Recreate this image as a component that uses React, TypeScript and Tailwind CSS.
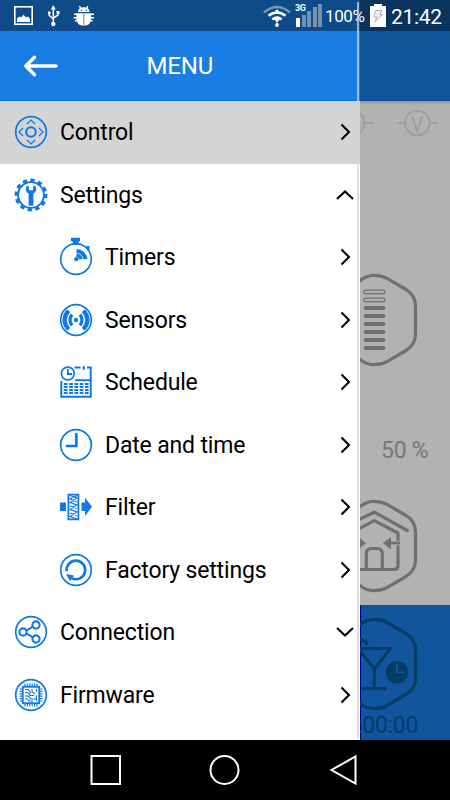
import type { ReactNode } from "react";

const BLUE = "#0f7ae5";

function Icon({ children, ring = true }: { children?: ReactNode; ring?: boolean }) {
  return (
    <svg width="34" height="44" viewBox="-17 -22 34 44" fill="none" stroke={BLUE} strokeWidth="1.7" className="shrink-0">
      {ring && <circle r="15.3" />}
      {children}
    </svg>
  );
}

const ControlIcon = () => (
  <Icon>
    <circle r="4.8" strokeWidth="2" />
    <path strokeWidth="1.2" d="M-4 -8L0 -12L4 -8M-4 8L0 12L4 8M-8 -4L-12 0L-8 4M8 -4L12 0L8 4" />
  </Icon>
);

const SettingsIcon = () => (
  <Icon ring={false}>
    <circle r="12.9" strokeWidth="1.9" />
    <circle r="14.6" strokeWidth="3.6" strokeDasharray="4.2 3.445" transform="rotate(-4)" />
    <path stroke="none" fill={BLUE} d="M-4.2 -9.6Q-7 -3.8 -2.4 -1.5V10.8H2.4V-1.5Q7 -3.8 4.2 -9.6L2.1 -8.6V-4.7H-2.1V-8.6Z" />
  </Icon>
);

const TimersIcon = () => (
  <Icon ring={false}>
    <circle cy="2" r="15.3" />
    <path stroke="none" fill={BLUE} d="M-5 -19.2H4V-16L2.5 -15V-12H-3V-15L-5 -16ZM9 -10L11.5 -11H13.5V-7.5L12.5 -6.5Z" />
    <circle cx="0.3" cy="2.2" r="2.1" fill={BLUE} stroke="none" />
    <path strokeWidth="3.6" d="M0.5 -1.8Q4.3 -1.5 5 2.2" />
    <path strokeWidth="3.8" d="M0.5 -6.2Q8.3 -5.2 9.7 2.2" />
  </Icon>
);

const SensorsIcon = () => (
  <Icon>
    <circle r="2.2" fill={BLUE} stroke="none" />
    <path strokeWidth="3.2" d="M-4 -5.5Q-8 0 -4 5.5M4 -5.5Q8 0 4 5.5" />
    <path strokeWidth="4.2" d="M-7.4 -9.4Q-15.4 0 -7.4 9.4M7.4 -9.4Q15.4 0 7.4 9.4" />
  </Icon>
);

const ScheduleIcon = () => (
  <Icon ring={false}>
    <path strokeWidth="2" d="M-14.7 -1V14.7H14.7V-14.5H11M8.5 -14.5H6.5M4.5 -14.5H-1.5M-1 -1.8H14" />
    <path strokeWidth="1.5" d="M8 -16V-12" />
    <circle cx="-8.2" cy="-8.5" r="6.4" />
    <path strokeWidth="1.8" d="M-8.2 -13V-8H-3.8" />
    <path strokeWidth="1.9" strokeDasharray="3.8 1.5" d="M-12.2 2H12.5M-12.2 5H12.5M-12.2 8H12.5M-12.2 11H12.5" />
  </Icon>
);

const ClockIcon = () => (
  <Icon>
    <path strokeWidth="2.7" strokeLinecap="round" d="M0.3 -11V1H-9" />
  </Icon>
);

const FilterIcon = () => (
  <Icon ring={false}>
    <path stroke="none" fill={BLUE} d="M-16 -4.5H-10V4H-16ZM5.5 -4.5H9V-9.2L16 -0.2L9 9V4H5.5Z" />
    <path strokeWidth="1.8" d="M-7.6 -12.4H2.4V12.4H-7.6Z" />
    <path strokeWidth="1.2" d="M-6 -11.5L1 -9L-6 -4.5L1 -2L-6 2.5L1 5L-6 9.5L1 12M1 -11.5L-6 -8L1 -5M-6 -1L1 1.5M-6 6L1 8.5" />
  </Icon>
);

const ResetIcon = () => (
  <Icon>
    <path strokeWidth="2.6" d="M-9.3 1.3A9.3 9.3 0 1 1 -4 8.4" />
    <path stroke="none" fill={BLUE} d="M-10 4L-2 5.4L-5.5 11L-7.2 9Z" />
  </Icon>
);

const ShareIcon = () => (
  <Icon>
    <g strokeWidth="2.1">
      <circle cx="-8" cy="0" r="3.6" />
      <circle cx="5" cy="-7" r="3.6" />
      <circle cx="5" cy="7" r="3.6" />
      <path d="M-4.6 -1.6L1.7 -5.2M-4.6 1.6L1.7 5.2" />
    </g>
  </Icon>
);

const ChipIcon = () => (
  <Icon>
    <rect x="-8.2" y="-8.2" width="16.4" height="16.4" strokeWidth="1.8" />
    <path
      strokeWidth="1.2"
      d="M-6 -11.5V-8M-3.6 -11.5V-8M-1.2 -11.5V-8M1.2 -11.5V-8M3.6 -11.5V-8M6 -11.5V-8M-6 11.5V8M-3.6 11.5V8M-1.2 11.5V8M1.2 11.5V8M3.6 11.5V8M6 11.5V8M-11.5 -6H-8M-11.5 -3.6H-8M-11.5 -1.2H-8M-11.5 1.2H-8M-11.5 3.6H-8M-11.5 6H-8M11.5 -6H8M11.5 -3.6H8M11.5 -1.2H8M11.5 1.2H8M11.5 3.6H8M11.5 6H8"
    />
    <path
      strokeWidth="1.1"
      d="M-6 -5.5H-3L-1 -3.5V-1M1 -6V-3L4 -1M5.5 -6V-3M-6 -2.5H-3.5L-1 0.5H3M-6 1H-3L0 4H5.5M-6 4H-3.5L-2 6H2M5.5 0.5V6"
    />
  </Icon>
);

type Arrow = "right" | "up" | "down";

const items: { label: string; icon: ReactNode; arrow: Arrow; sub?: boolean; active?: boolean }[] = [
  { label: "Control", icon: <ControlIcon />, arrow: "right", active: true },
  { label: "Settings", icon: <SettingsIcon />, arrow: "up" },
  { label: "Timers", icon: <TimersIcon />, arrow: "right", sub: true },
  { label: "Sensors", icon: <SensorsIcon />, arrow: "right", sub: true },
  { label: "Schedule", icon: <ScheduleIcon />, arrow: "right", sub: true },
  { label: "Date and time", icon: <ClockIcon />, arrow: "right", sub: true },
  { label: "Filter", icon: <FilterIcon />, arrow: "right", sub: true },
  { label: "Factory settings", icon: <ResetIcon />, arrow: "right", sub: true },
  { label: "Connection", icon: <ShareIcon />, arrow: "down" },
  { label: "Firmware", icon: <ChipIcon />, arrow: "right" },
];

const arrowPaths: Record<Arrow, string> = {
  right: "M-3.5 -7.5L4 0L-3.5 7.5",
  up: "M-8 4L0 -3.6L8 4",
  down: "M-8 -4L0 3.6L8 -4",
};

function Chevron({ dir }: { dir: Arrow }) {
  return (
    <svg width="20" height="20" viewBox="-10 -10 20 20" fill="none" stroke="#000" strokeWidth="2.1" className="shrink-0">
      <path d={arrowPaths[dir]} />
    </svg>
  );
}

function Drawer() {
  return (
    <aside className="w-[360px] shrink-0 flex flex-col bg-white">
      <header className="h-[101px] pt-[31px] flex items-center bg-[#1a7de3] border-b border-[#0873e6]">
        <svg width="36" height="24" viewBox="0 0 36 24" fill="none" stroke="#fff" strokeWidth="3.4" strokeLinecap="round" strokeLinejoin="round" className="ml-[23px]">
          <path d="M33 12H3M11.5 3.2L2.8 12L11.5 20.8" />
        </svg>
        <h1 className="ml-[87.5px] pt-px text-[24px] leading-none tracking-[-0.15px] text-white">MENU</h1>
      </header>
      <nav className="flex-1 text-[23px] tracking-[-0.17px] text-black">
        {items.map((item) => (
          <div
            key={item.label}
            className={`h-[62.5px] flex items-center pr-[5px] ${item.sub ? "pl-[59px]" : "pl-[14px]"} ${item.active ? "bg-[#d4d4d4]" : ""}`}
          >
            {item.icon}
            <span className="flex-1 ml-3 pt-[2px] whitespace-nowrap">{item.label}</span>
            <Chevron dir={item.arrow} />
          </div>
        ))}
      </nav>
    </aside>
  );
}

function HexTile({ color, children }: { color: string; children: ReactNode }) {
  return (
    <svg width="90" height="100" viewBox="0 0 90 100" fill="none" stroke={color} strokeWidth="3.2" strokeLinecap="round" strokeLinejoin="round" className="shrink-0">
      <path d="M-1 11.3Q6 5.3 14 5.3Q21 5.3 27 8.4L46 19.5Q55.5 25.5 55.5 36V64Q55.5 74.5 46 80.5L27 91.6Q21 94.7 14 94.7Q6 94.7 -1 88.7" />
      {children}
    </svg>
  );
}

function Backdrop() {
  const filled = [37.7, 45.7, 53.7, 61.7, 69.7, 77.7];
  return (
    <main className="flex-1 min-w-0 overflow-hidden flex flex-col bg-[#b2b2b2]">
      <div className="h-[101px] shrink-0 bg-[#11559b] border-b border-[#064e9e]" />
      <div className="h-1 shrink-0 bg-linear-to-b from-[#929292] to-[#b2b2b2]" />
      <svg width="90" height="36" viewBox="0 105 90 36" fill="none" stroke="#9f9f9f" strokeWidth="2" className="shrink-0">
        <circle cx="-8" cy="123" r="12.3" />
        <circle cx="57.3" cy="123" r="12.3" />
        <path d="M4.5 123H13M38 123H45M69.6 123H77" />
        <path d="M52 116L57.3 131L62.6 116" />
      </svg>
      <div className="h-[129px] shrink-0" />
      <HexTile color="#707070">
        <g strokeWidth="1.2">
          <rect x="4" y="20.2" width="21" height="3.4" rx="1.2" />
          <rect x="4" y="28.2" width="21" height="3.4" rx="1.2" />
        </g>
        <g fill="#707070" stroke="none">
          {filled.map((y) => (
            <rect key={y} x="3.8" y={y - 1.6} width="21.4" height="3.8" rx="1.7" />
          ))}
        </g>
      </HexTile>
      <div className="h-[126px] shrink-0 pt-[64px] pl-[21px] text-[23px] tracking-[-0.3px] text-[#777777] whitespace-nowrap">50 %</div>
      <HexTile color="#707070">
        <path d="M-1 23.5L14.3 16.2L47.3 34.5M-1 32.8L14.3 24.7L38 37V43.5M38 50.5V69.5Q38 73.5 34 73.5H-1" />
        <path d="M6.3 73V58Q6.3 52.5 11.5 52.5H17.3Q22.3 52.5 22.3 58V73" />
        <path strokeWidth="2.8" strokeLinecap="butt" d="M40 47H29" />
        <path fill="#707070" strokeWidth="1" d="M23.8 47L30.5 41.8V52.2ZM5.2 47L-1 41.8V52.2Z" />
      </HexTile>
      <div className="h-[9px] shrink-0" />
      <section className="flex-1 pt-[9px] bg-[#11559d] border-l border-[#00009a]">
        <div className="-ml-px">
          <HexTile color="#063c65">
            <path d="M-1 25.3Q4 26 7 30" />
            <path d="M-1 34.5H30.5L14.3 55L-1 35.5M14.3 55V74.5M3 74.5H25.5" />
            <circle cx="37" cy="58.5" r="11.2" fill="#063c65" stroke="none" />
            <path stroke="#11559d" strokeWidth="1.8" strokeLinecap="butt" d="M37 50V58.3H44" />
          </HexTile>
          <div className="-mt-[5px] -ml-[3px] whitespace-nowrap text-[23px] leading-[34px] tracking-[-0.3px] text-[#063c65]">:00:00</div>
        </div>
      </section>
    </main>
  );
}

function StatusBar() {
  return (
    <div className="absolute inset-x-0 top-0 h-[31px] bg-black/40 flex items-center text-white">
      <svg width="100" height="31" viewBox="0 0 100 31" fill="none" stroke="#fff">
        <rect x="14.8" y="6.8" width="17.4" height="17.4" strokeWidth="1.6" />
        <path fill="#fff" stroke="none" d="M17 22V18.5L19.5 16.5L21 17.5L23.5 14.8L26 17.2L28 16.5L30 19V22Z" />
        <path strokeWidth="1.5" d="M53.3 8V24M49.2 12V15.5L53.3 19M58 12V15L53.3 18" />
        <path fill="#fff" stroke="none" d="M53.3 5L55.8 9.5H50.8Z" />
        <circle cx="53.3" cy="24" r="2.2" fill="#fff" stroke="none" />
        <circle cx="49.3" cy="12.7" r="1.5" fill="#fff" stroke="none" />
        <rect x="56.5" y="11" width="3" height="3" fill="#fff" stroke="none" />
        <path strokeWidth="1.4" d="M79.5 6L81 9M87.8 6L86.3 9M74 14.3H77M90.5 14.3H94M73.6 17.7H77M90.5 17.7H94M75 21L78 20M92.5 21L89.5 20" />
        <path fill="#fff" stroke="none" d="M78 12Q78 7.3 83.8 7.3Q89.5 7.3 89.5 12ZM76.3 13.3H91.2V18Q91.2 25.7 83.8 25.7Q76.3 25.7 76.3 18Z" />
        <path stroke="#3f6492" strokeWidth="0.8" d="M83.8 13.5V25.5" />
        <circle cx="81.3" cy="10.3" r="0.7" fill="#114a86" stroke="none" />
        <circle cx="86.3" cy="10.3" r="0.7" fill="#114a86" stroke="none" />
      </svg>
      <div className="flex-1" />
      <svg width="30" height="31" viewBox="262 0 30 31" fill="none" stroke="#fff">
        <path stroke="#7796b8" strokeWidth="2.6" d="M264 12.5Q277 1.5 290 12.5" />
        <path strokeWidth="2.8" d="M268.5 15.7Q277 9 285.5 15.7M272.3 19.5Q277 16 281.7 19.5" />
        <path fill="#fff" stroke="none" d="M277 9L281 14H273ZM277 23L273.5 18H280.5Z" />
        <circle cx="277" cy="25" r="1.9" fill="#fff" stroke="none" />
      </svg>
      <div className="relative ml-[3px] h-full w-[28px] flex items-end gap-[1.5px] pb-1">
        <span className="absolute left-0 top-[3px] text-[9px] leading-[10px] font-bold tracking-[-0.3px]">3G</span>
        <i className="ml-px w-1 h-[9px] bg-white" />
        <i className="w-1 h-3 bg-[#7090b4]" />
        <i className="w-1 h-4 bg-[#7090b4]" />
        <i className="w-1 h-5 bg-[#7090b4]" />
        <i className="w-1 h-[23px] bg-[#7090b4]" />
      </div>
      <span className="ml-[2px] w-[45px] pt-[2px] text-[17px] leading-none tracking-[-0.4px]">100%</span>
      <svg width="16" height="31" viewBox="370 0 16 31">
        <path fill="#fff" d="M374 4H382V6H386V27H370V6H374Z" />
        <path fill="#eee" stroke="#aaa" strokeWidth="0.9" d="M375.5 10.5H382L380 14.5H382.5L375 22L377 17H374Z" />
      </svg>
      <span className="ml-[5px] w-[59px] pt-[3px] text-[21px] leading-none tracking-[-0.3px]">21:42</span>
    </div>
  );
}

export default function App() {
  return (
    <div className="relative w-[450px] h-[800px] flex flex-col overflow-hidden bg-black font-[Roboto,sans-serif]">
      <div className="relative h-[740px] flex">
        <Drawer />
        <Backdrop />
        <StatusBar />
        {/* drawer edge, interrupted by the highlighted row */}
        <div className="absolute left-[357px] top-[2px] h-[99px] w-[2px] bg-[#c3cbe9]/80" />
        <div className="absolute left-[357px] top-[164px] h-[574px] w-[2px] bg-[#dedede]" />
      </div>
      <div className="flex-1 flex items-center justify-center">
        <svg width="270" height="40" viewBox="90 750 270 40" fill="none" stroke="#fff" strokeWidth="2">
          <rect x="91.5" y="756" width="28.5" height="28" />
          <circle cx="224.5" cy="770" r="14" />
          <path d="M355.5 756.5V783.5L331.5 770Z" />
        </svg>
      </div>
    </div>
  );
}
